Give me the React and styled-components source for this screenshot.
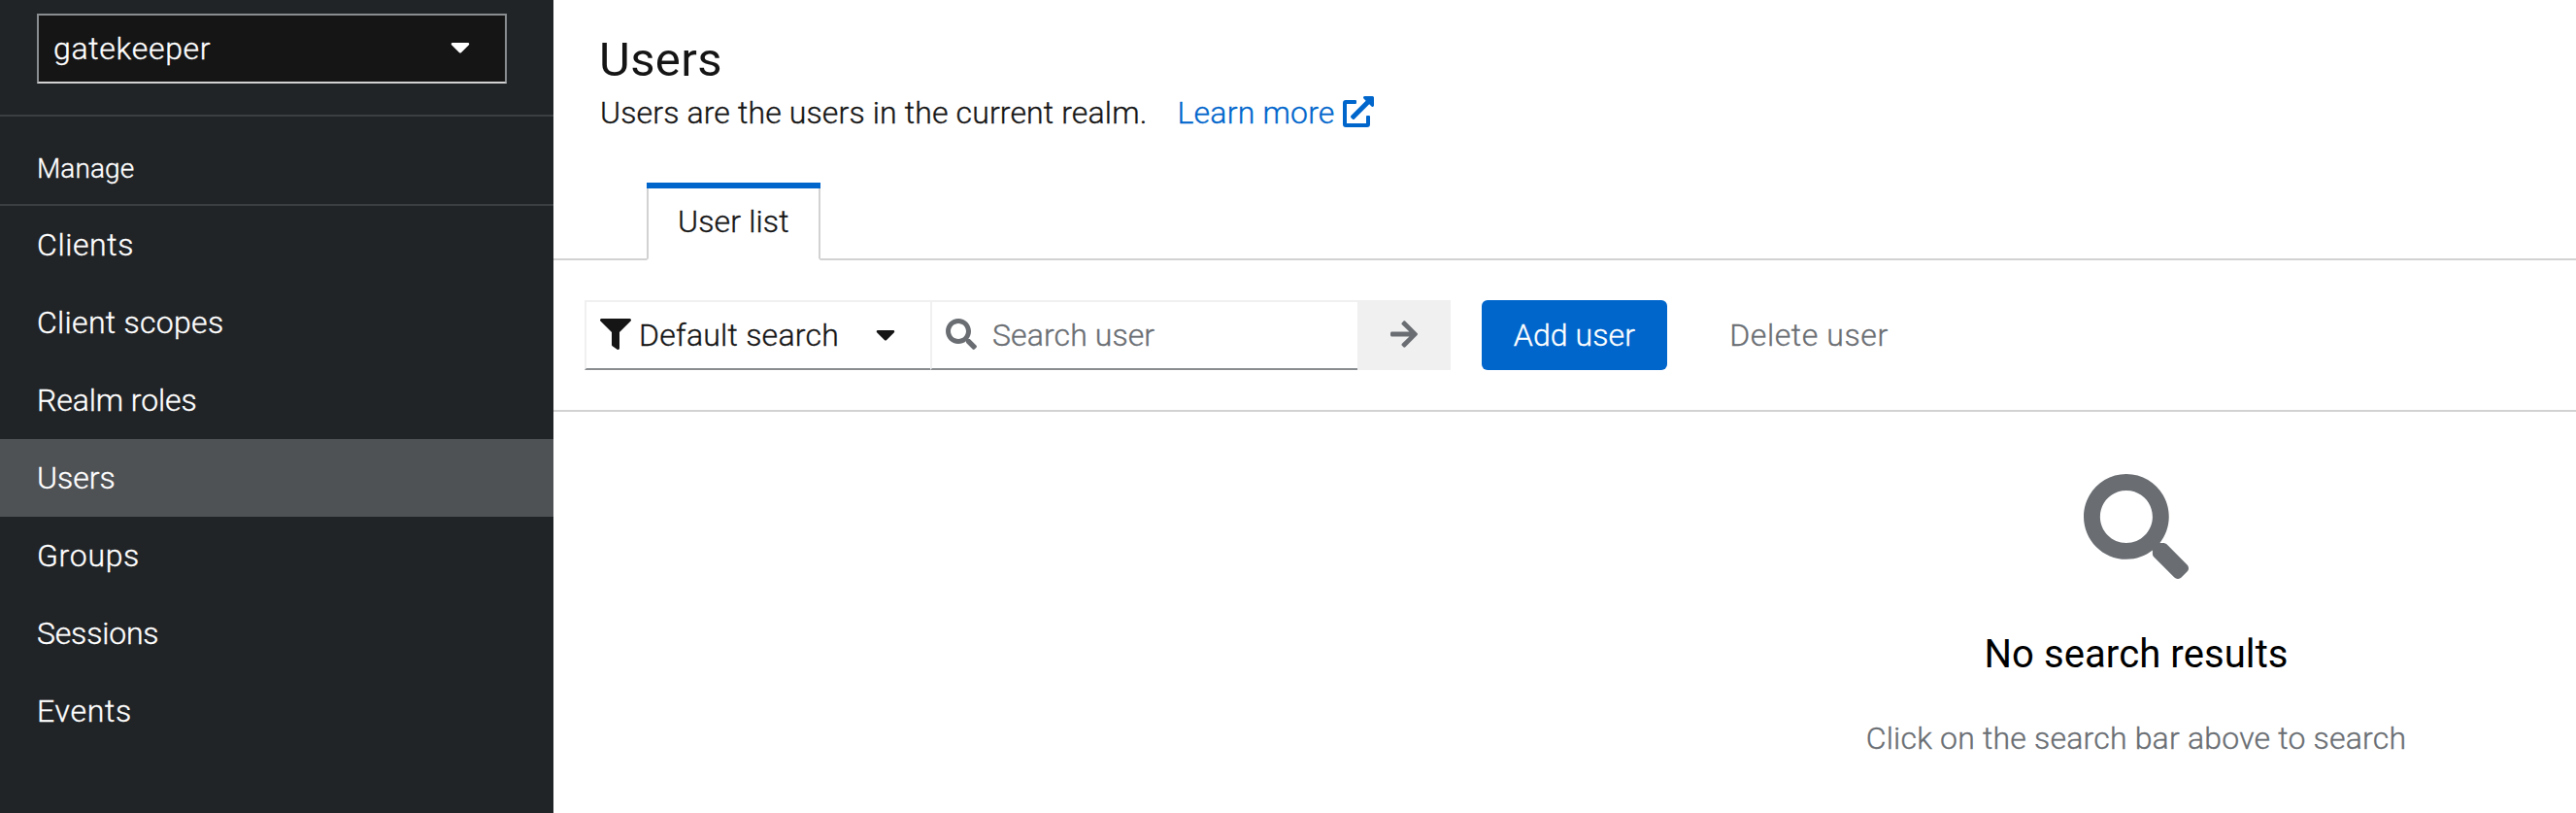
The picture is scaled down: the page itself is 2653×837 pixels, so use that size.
import React from 'react';
import styled, { createGlobalStyle } from 'styled-components';
import { FaArrowRight, FaCaretDown, FaExternalLinkAlt, FaFilter, FaSearch } from 'react-icons/fa';

const GlobalStyle = createGlobalStyle`
  *, *::before, *::after { box-sizing: border-box; }
  body {
    margin: 0;
    background: #fff;
    color: #151515;
    font: 300 32px/48px Roboto, "Noto Sans", sans-serif;
    overflow: hidden;
  }
  h1, h2, p, ul { margin: 0; padding: 0; }
  button { font: inherit; margin: 0; }
`;

const Label = styled.span`
  letter-spacing: ${p => p.$track || 0}px;
  -webkit-text-stroke: ${p => (p.$bold ? 0 : 0.35)}px currentColor;
  white-space: nowrap;
`;

const IconBox = styled.span`
  display: flex;
  flex: none;
  margin-bottom: 2px;
  font-size: ${p => p.$size || 32}px;
`;

const Shell = styled.div`
  display: flex;
  width: 100vw;
  height: 100vh;
  overflow: hidden;
`;

const Sidebar = styled.nav`
  flex: none;
  width: 570px;
  background: #212427;
  color: #fff;
`;

const RealmArea = styled.div`
  height: 120px;
  padding: 14px 48px 0 38px;
  border-bottom: 2px solid #3c3f42;
`;

const RealmSelect = styled.button`
  display: flex;
  align-items: center;
  justify-content: space-between;
  width: 484px;
  height: 72px;
  padding: 0 30px 0 15px;
  background: #151515;
  color: #fff;
  border: 2px solid #8a8d90;
  border-bottom-color: #d2d2d2;
  border-radius: 0;

  ${IconBox} { margin-bottom: 4px; }
`;

const SectionTitle = styled.h2`
  height: 92px;
  padding: 33px 38px 0;
  border-bottom: 2px solid #3c3f42;
  font-size: 28px;
  font-weight: 300;
  line-height: 41px;
`;

const NavList = styled.ul`
  list-style: none;
`;

const NavItem = styled.li`
  height: 80px;
  padding: 16px 38px;
  background: ${p => (p.$active ? '#4f5255' : 'transparent')};
`;

const Main = styled.main`
  flex: 1;
  min-width: 0;
  overflow: hidden;
`;

const PageHeader = styled.header`
  height: 188px;
  padding: 31px 47px 0;
`;

const PageTitle = styled.h1`
  font-size: 49px;
  font-weight: 400;
  line-height: 61px;
`;

const Intro = styled.p`
  display: flex;
  align-items: center;
  padding-left: 1px;
`;

const LearnMore = styled.a`
  display: flex;
  align-items: center;
  gap: 8px;
  margin-left: 31px;
  color: #06c;
`;

const TabBar = styled.div`
  display: flex;
  height: 80px;
  padding-left: 96px;
  border-bottom: 2px solid #d2d2d2;
`;

const Tab = styled.div`
  position: relative;
  width: 179px;
  height: 80px;
  padding: 16px 0 0 30px;
  background: #fff;
  border: 2px solid #d2d2d2;
  border-top: 0;
  border-bottom-color: #fff;

  &::before {
    content: '';
    position: absolute;
    top: 0;
    left: -2px;
    right: -2px;
    height: 6px;
    background: #06c;
  }
`;

const Toolbar = styled.div`
  display: flex;
  height: 156px;
  padding: 41px 32px 0;
  border-bottom: 2px solid #d2d2d2;
`;

const FilterSelect = styled.button`
  display: flex;
  align-items: center;
  gap: 8px;
  width: 356px;
  height: 72px;
  padding: 0 30px 0 14px;
  color: #151515;
  background: #fff;
  border: 2px solid #f0f0f0;
  border-right: 0;
  border-bottom-color: #8a8d90;
  border-radius: 0;

  ${IconBox}:last-child { margin-left: auto; }
`;

const SearchField = styled.div`
  display: flex;
  align-items: center;
  gap: 16px;
  width: 440px;
  height: 72px;
  padding-left: 14px;
  color: #6a6e73;
  border: 2px solid #f0f0f0;
  border-right: 0;
  border-bottom-color: #8a8d90;
`;

const SubmitButton = styled.button`
  display: flex;
  align-items: center;
  justify-content: center;
  width: 96px;
  height: 72px;
  padding: 0;
  color: #6a6e73;
  background: #f0f0f0;
  border: 0;
`;

const ActionButton = styled.button`
  width: ${p => p.$width}px;
  height: 72px;
  margin-left: 32px;
  padding: 12px 0;
  text-align: center;
  color: ${p => (p.$primary ? '#fff' : '#6a6e73')};
  background: ${p => (p.$primary ? '#06c' : 'transparent')};
  border: 0;
  border-radius: 6px;
`;

const EmptyState = styled.section`
  display: flex;
  flex-direction: column;
  align-items: center;
  width: 3260px;
  padding-top: 64px;
  color: #6a6e73;

  ${IconBox} { margin: 0; }
`;

const EmptyTitle = styled.h2`
  margin-top: 47px;
  color: #000;
  font-size: 40px;
  font-weight: 400;
  line-height: 61px;
`;

const EmptyBody = styled.p`
  margin-top: 32px;
`;

const navItems = [
  { label: 'Clients', track: 0.6 },
  { label: 'Client scopes', track: 0.3 },
  { label: 'Realm roles', track: -0.1 },
  { label: 'Users', track: 0, active: true },
  { label: 'Groups', track: 0.7 },
  { label: 'Sessions', track: -0.2 },
  { label: 'Events', track: 0.7 },
];

export default function App() {
  return (
    <>
      <GlobalStyle />
      <Shell>
        <Sidebar>
          <RealmArea>
            <RealmSelect>
              <Label $track={0.7}>gatekeeper</Label>
              <IconBox><FaCaretDown /></IconBox>
            </RealmSelect>
          </RealmArea>
          <SectionTitle><Label $track={0.1}>Manage</Label></SectionTitle>
          <NavList>
            {navItems.map(item => (
              <NavItem key={item.label} $active={item.active}>
                <Label $track={item.track}>{item.label}</Label>
              </NavItem>
            ))}
          </NavList>
        </Sidebar>
        <Main>
          <PageHeader>
            <PageTitle><Label $bold $track={0.4}>Users</Label></PageTitle>
            <Intro>
              <Label $track={0.14}>Users are the users in the current realm.</Label>
              <LearnMore>
                <Label $track={0.2}>Learn more</Label>
                <IconBox><FaExternalLinkAlt /></IconBox>
              </LearnMore>
            </Intro>
          </PageHeader>
          <TabBar>
            <Tab><Label $track={0.15}>User list</Label></Tab>
          </TabBar>
          <Toolbar>
            <FilterSelect>
              <IconBox><FaFilter /></IconBox>
              <Label $track={0.25}>Default search</Label>
              <IconBox><FaCaretDown /></IconBox>
            </FilterSelect>
            <SearchField>
              <IconBox><FaSearch /></IconBox>
              <Label $track={0.1}>Search user</Label>
            </SearchField>
            <SubmitButton aria-label="Search">
              <IconBox><FaArrowRight /></IconBox>
            </SubmitButton>
            <ActionButton $primary $width={191}><Label $track={0.1}>Add user</Label></ActionButton>
            <ActionButton $width={228}><Label $track={0.6}>Delete user</Label></ActionButton>
          </Toolbar>
          <EmptyState>
            <IconBox $size={108}><FaSearch /></IconBox>
            <EmptyTitle><Label $bold $track={0.1}>No search results</Label></EmptyTitle>
            <EmptyBody><Label $track={0.2}>Click on the search bar above to search</Label></EmptyBody>
          </EmptyState>
        </Main>
      </Shell>
    </>
  );
}
